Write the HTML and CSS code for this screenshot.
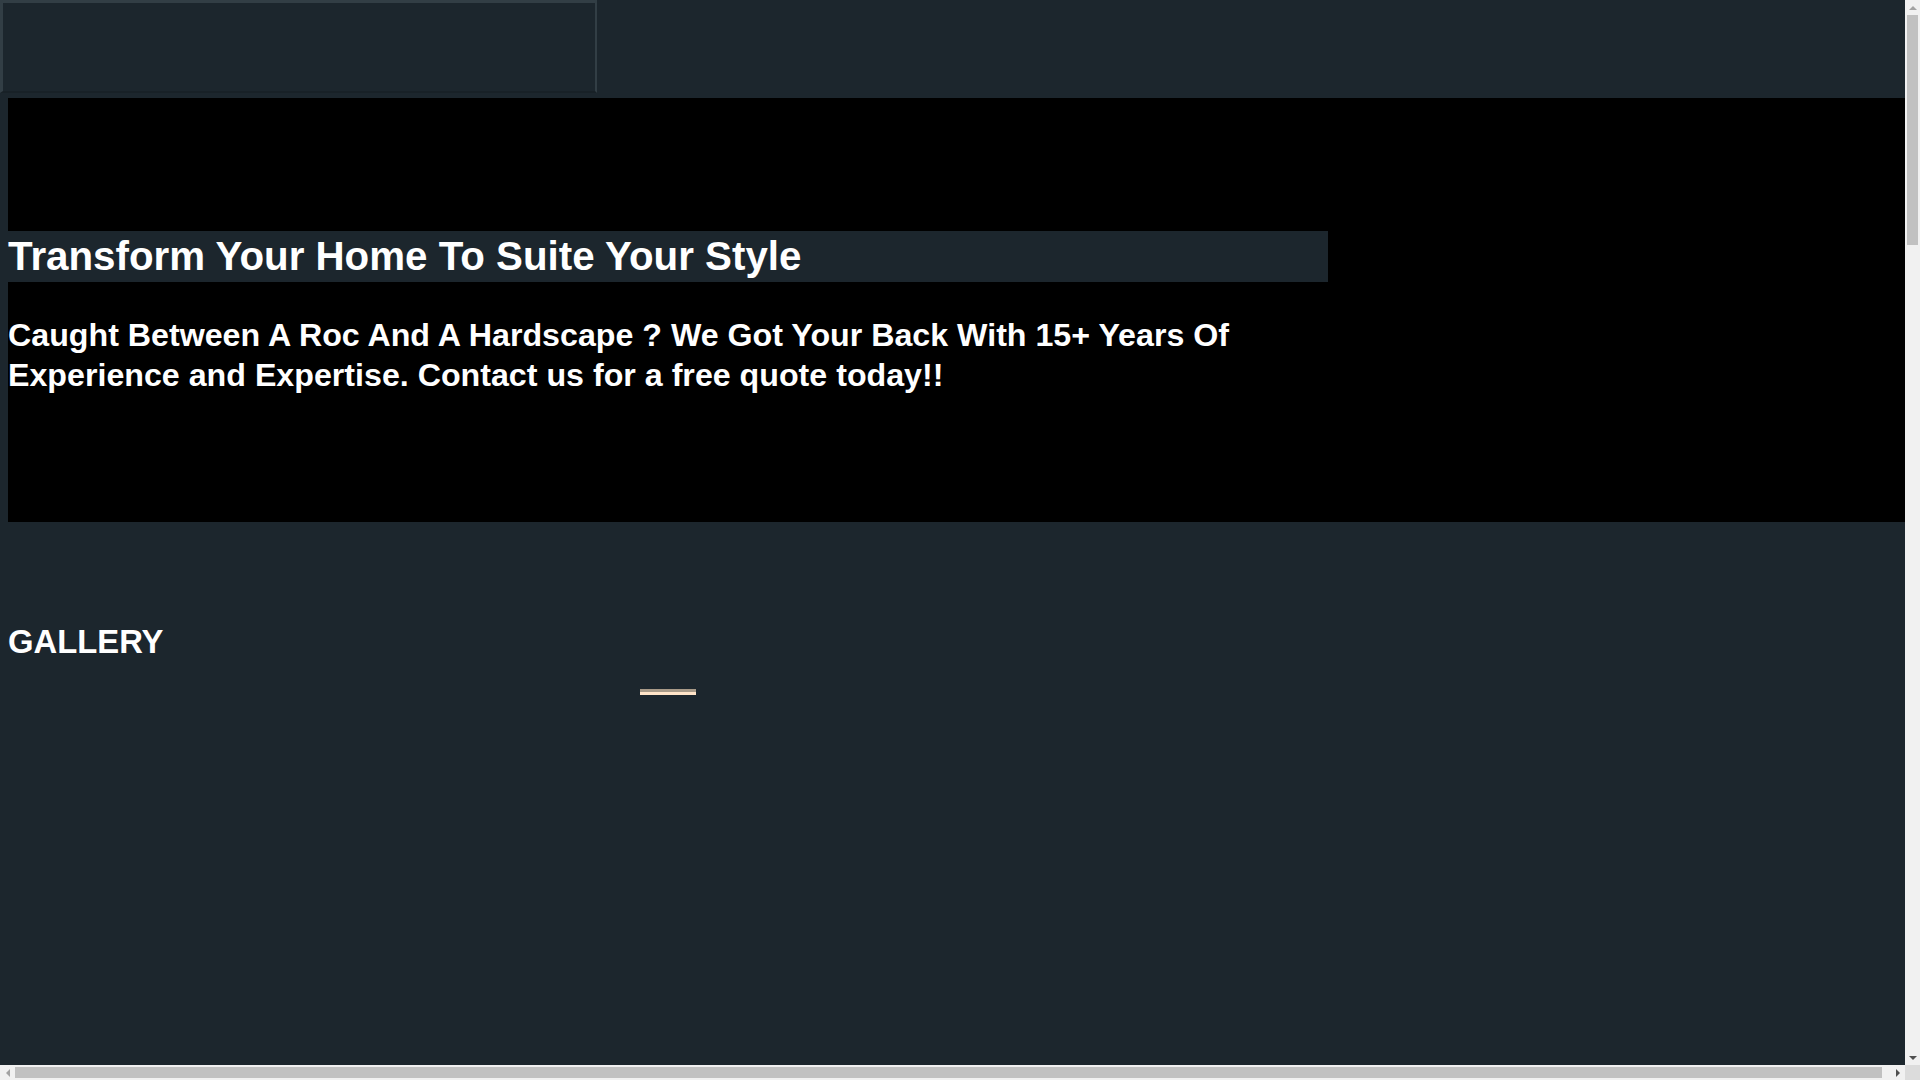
FILE: index.html
```html
<!DOCTYPE html>
<html lang="en">
<head>
<meta charset="utf-8">
<title>Transform Your Home</title>
<link rel="stylesheet" href="styles.css">
</head>
<body>
<div class="page">
  <div class="topframe"></div>
  <section class="hero">
    <div class="hero-inner">
      <h1 class="hero-title">Transform Your Home To Suite Your Style</h1>
      <p class="hero-text">Caught Between A Roc And A Hardscape ? We Got Your Back With 15+ Years Of Experience and Expertise. Contact us for a free quote today!!</p>
    </div>
  </section>
  <section class="gallery">
    <h2 class="gallery-title">GALLERY</h2>
    <div class="gallery-controls"><span class="gallery-dot"></span></div>
    <div class="gallery-body"></div>
  </section>
</div>
<div class="vscroll">
  <span class="arrow arrow-up"></span>
  <div class="vtrack"><span class="vthumb"></span></div>
  <span class="arrow arrow-down"></span>
</div>
<div class="hscroll">
  <span class="arrow arrow-left"></span>
  <div class="htrack"><span class="hthumb"></span></div>
  <span class="arrow arrow-right"></span>
</div>
<div class="corner"></div>
</body>
</html>
```

FILE: styles.css
```css
html, body {
  margin: 0;
  padding: 0;
  overflow: hidden;
  height: 1080px;
}
body {
  background: #1c262d;
  color: #ffffff;
  font-family: "Liberation Sans", Arial, sans-serif;
}
.page {
  width: 1905px;
  height: 1065px;
  overflow: hidden;
  background: #1c262d;
}
.topframe {
  width: 592px;
  height: 88px;
  border-top: 3px solid #323e45;
  border-left: 3px solid #323e45;
  border-right: 2px solid #323e45;
  border-bottom: 2px solid #182127;
  background: #1c262d;
}
.hero {
  margin: 5px 0 0 8px;
  width: 1905px;
  height: 424px;
  background: #000000;
  padding-top: 133px;
  box-sizing: border-box;
}
.hero-inner {
  width: 1320px;
}
.hero-title {
  margin: 0;
  background: #1c262d;
  font-size: 40.3px;
  line-height: 51px;
  font-weight: bold;
}
.hero-text {
  margin: 33px 0 0;
  font-size: 32.2px;
  line-height: 40px;
  font-weight: bold;
  width: 1310px;
}
.gallery {
  padding: 101px 0 0 8px;
}
.gallery-title {
  margin: 0;
  font-size: 32.8px;
  line-height: 37px;
  font-weight: bold;
}
.gallery-controls {
  display: flex;
  padding: 29px 0 0 632px;
}
.gallery-dot {
  display: block;
  width: 56px;
  height: 3px;
  background: #ffe4c8;
  border-top: 3px solid #a89a88;
}
.gallery-body {
  height: 400px;
}

/* browser scrollbars */
.vscroll {
  position: fixed;
  top: 0;
  right: 0;
  width: 15px;
  height: 1065px;
  background: #f1f1f1;
  display: flex;
  flex-direction: column;
  align-items: center;
}
.vtrack {
  flex: 1;
  width: 100%;
  display: flex;
  justify-content: center;
}
.vthumb {
  display: block;
  width: 11px;
  height: 230px;
  background: #c1c1c1;
}
.hscroll {
  position: fixed;
  left: 0;
  bottom: 0;
  width: 1905px;
  height: 15px;
  background: #f1f1f1;
  display: flex;
  align-items: center;
}
.htrack {
  flex: 1;
  height: 100%;
  display: flex;
  align-items: center;
}
.hthumb {
  display: block;
  height: 11px;
  width: 1867px;
  background: #c1c1c1;
}
.corner {
  position: fixed;
  right: 0;
  bottom: 0;
  width: 15px;
  height: 15px;
  background: #dcdcdc;
}
.arrow {
  display: flex;
  flex: none;
  width: 15px;
  height: 15px;
  align-items: center;
  justify-content: center;
}
.arrow::before {
  content: "";
  display: block;
  width: 0;
  height: 0;
  border-style: solid;
}
.arrow-up::before {
  border-width: 0 4px 4px 4px;
  border-color: transparent transparent #a3a3a3 transparent;
}
.arrow-down::before {
  border-width: 4px 4px 0 4px;
  border-color: #505050 transparent transparent transparent;
}
.arrow-left::before {
  border-width: 4px 4px 4px 0;
  border-color: transparent #a3a3a3 transparent transparent;
}
.arrow-right::before {
  border-width: 4px 0 4px 4px;
  border-color: transparent transparent transparent #505050;
}
```
